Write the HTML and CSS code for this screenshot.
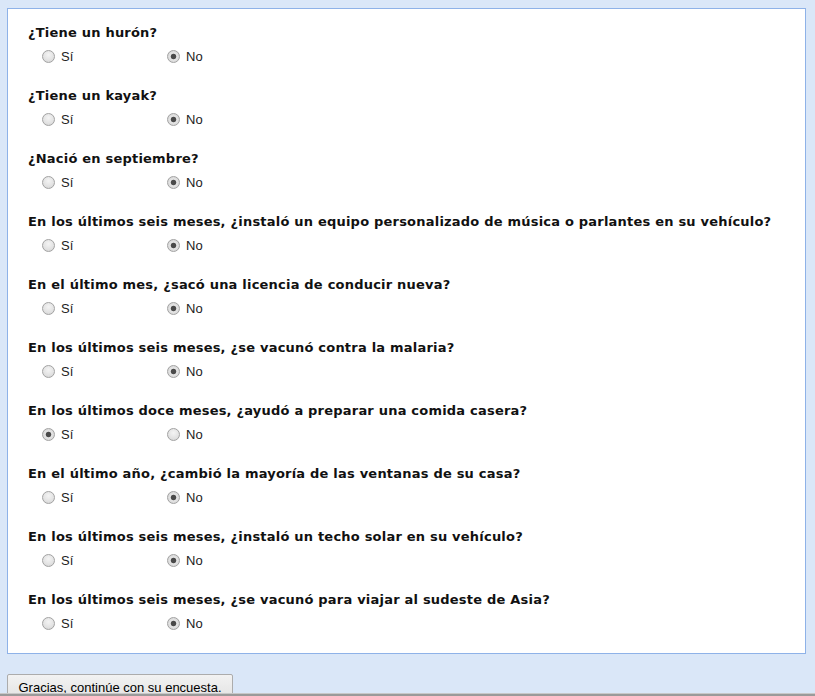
FILE: index.html
```html
<!DOCTYPE html>
<html lang="es">
<head>
<meta charset="utf-8">
<title>Encuesta</title>
<link rel="stylesheet" href="styles.css">
</head>
<body>
<form class="survey">
  <div class="panel">
    <div class="q">
      <div class="q-title">¿Tiene un hurón?</div>
      <div class="opts">
        <label class="opt"><input type="radio" name="q1"><span>Sí</span></label>
        <label class="opt"><input type="radio" name="q1" checked><span>No</span></label>
      </div>
    </div>
    <div class="q">
      <div class="q-title">¿Tiene un kayak?</div>
      <div class="opts">
        <label class="opt"><input type="radio" name="q2"><span>Sí</span></label>
        <label class="opt"><input type="radio" name="q2" checked><span>No</span></label>
      </div>
    </div>
    <div class="q">
      <div class="q-title">¿Nació en septiembre?</div>
      <div class="opts">
        <label class="opt"><input type="radio" name="q3"><span>Sí</span></label>
        <label class="opt"><input type="radio" name="q3" checked><span>No</span></label>
      </div>
    </div>
    <div class="q">
      <div class="q-title">En los últimos seis meses, ¿instaló un equipo personalizado de música o parlantes en su vehículo?</div>
      <div class="opts">
        <label class="opt"><input type="radio" name="q4"><span>Sí</span></label>
        <label class="opt"><input type="radio" name="q4" checked><span>No</span></label>
      </div>
    </div>
    <div class="q">
      <div class="q-title">En el último mes, ¿sacó una licencia de conducir nueva?</div>
      <div class="opts">
        <label class="opt"><input type="radio" name="q5"><span>Sí</span></label>
        <label class="opt"><input type="radio" name="q5" checked><span>No</span></label>
      </div>
    </div>
    <div class="q">
      <div class="q-title">En los últimos seis meses, ¿se vacunó contra la malaria?</div>
      <div class="opts">
        <label class="opt"><input type="radio" name="q6"><span>Sí</span></label>
        <label class="opt"><input type="radio" name="q6" checked><span>No</span></label>
      </div>
    </div>
    <div class="q">
      <div class="q-title">En los últimos doce meses, ¿ayudó a preparar una comida casera?</div>
      <div class="opts">
        <label class="opt"><input type="radio" name="q7" checked><span>Sí</span></label>
        <label class="opt"><input type="radio" name="q7"><span>No</span></label>
      </div>
    </div>
    <div class="q">
      <div class="q-title">En el último año, ¿cambió la mayoría de las ventanas de su casa?</div>
      <div class="opts">
        <label class="opt"><input type="radio" name="q8"><span>Sí</span></label>
        <label class="opt"><input type="radio" name="q8" checked><span>No</span></label>
      </div>
    </div>
    <div class="q">
      <div class="q-title">En los últimos seis meses, ¿instaló un techo solar en su vehículo?</div>
      <div class="opts">
        <label class="opt"><input type="radio" name="q9"><span>Sí</span></label>
        <label class="opt"><input type="radio" name="q9" checked><span>No</span></label>
      </div>
    </div>
    <div class="q">
      <div class="q-title">En los últimos seis meses, ¿se vacunó para viajar al sudeste de Asia?</div>
      <div class="opts">
        <label class="opt"><input type="radio" name="q10"><span>Sí</span></label>
        <label class="opt"><input type="radio" name="q10" checked><span>No</span></label>
      </div>
    </div>
  </div>
  <div class="actions">
    <button type="button" class="btn">Gracias, continúe con su encuesta.</button>
  </div>
</form>
<div class="bottom-edge"></div>
</body>
</html>
```

FILE: styles.css
```css
html, body {
  margin: 0;
  padding: 0;
}
body {
  background: #dae7f8;
  color: #000;
  font-family: "Liberation Sans", Arial, sans-serif;
  font-size: 13px;
}
.survey {
  padding: 8px 9px 0 7px;
}
.panel {
  background: #fff;
  border: 1px solid #8eb2e8;
  padding: 16px 0 0 0;
}
.q {
  margin-bottom: 24px;
}
.q:last-child {
  margin-bottom: 22px;
}
.q-title {
  font-family: "DejaVu Sans", Verdana, sans-serif;
  font-weight: bold;
  font-size: 13px;
  line-height: 16px;
  letter-spacing: 0.21px;
  padding-left: 20px;
  color: #111;
}
.opts {
  display: flex;
  margin-top: 7px;
  padding-left: 34px;
  height: 16px;
  align-items: center;
}
.opt {
  width: 125px;
  display: flex;
  align-items: center;
  gap: 6px;
  color: #222;
  font-size: 13px;
  line-height: 16px;
}
.opt span {
  position: relative;
  top: 1px;
}
.opt input {
  appearance: none;
  -webkit-appearance: none;
  margin: 0;
  width: 13px;
  height: 13px;
  border-radius: 50%;
  border: 1px solid #a2a2a2;
  background: radial-gradient(circle at 50% 35%, #f4f4f4 0%, #e2e2e2 60%, #d0d0d0 100%);
  box-sizing: border-box;
}
.opt input:checked {
  background: radial-gradient(circle, #4a4a4a 0 2.2px, #7a7a7a 2.6px, #e6e6e6 3.2px, #dedede 60%, #d2d2d2 100%);
}
.actions {
  margin-top: 20px;
}
.btn {
  font-family: "Liberation Sans", Arial, sans-serif;
  font-size: 13px;
  color: #000;
  width: 226px;
  height: 26px;
  padding: 2px 0 0 0;
  text-align: center;
  border: 1px solid #acacac;
  border-radius: 2px;
  background: linear-gradient(#f2f2f2, #e3e3e3);
  line-height: 18px;
  vertical-align: top;
}
.bottom-edge {
  position: fixed;
  left: 0;
  right: 0;
  bottom: 0;
  height: 2px;
  background: #9a9a9a;
  border-top: 1px solid #c8c8c8;
}
```
